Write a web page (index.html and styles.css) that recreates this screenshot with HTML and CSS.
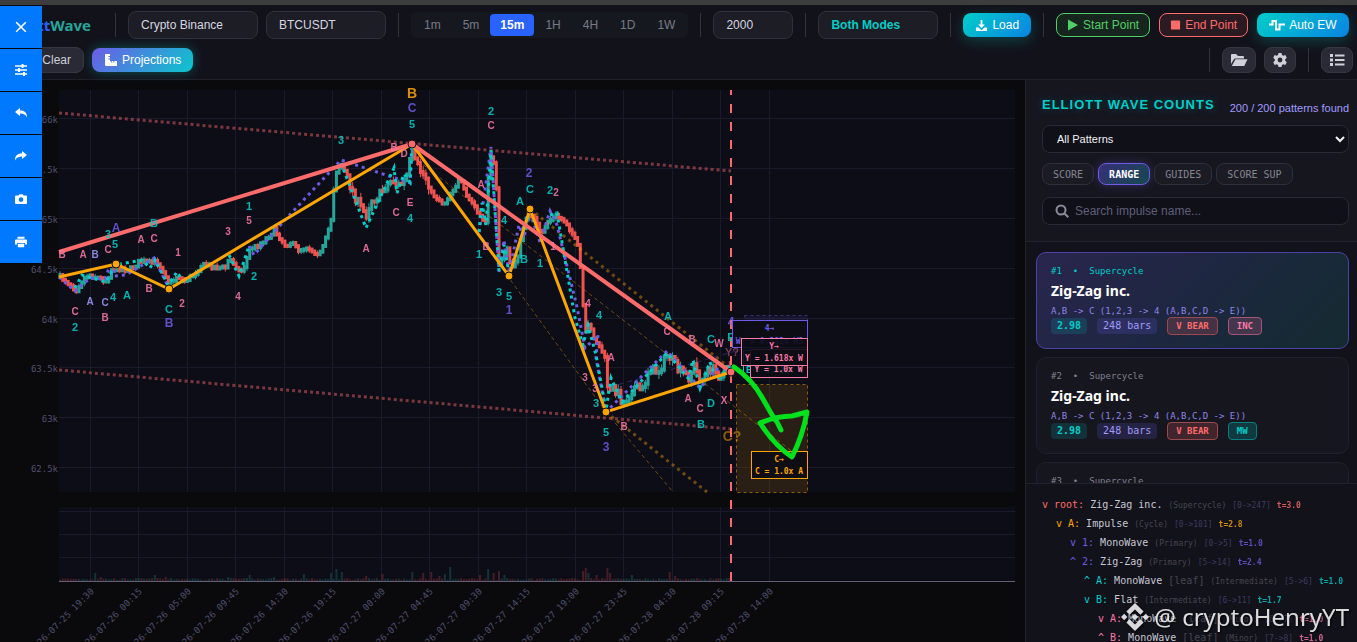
FILE: index.html
```html
<!DOCTYPE html>
<html lang="en">
<head>
  <meta charset="UTF-8" />
  <meta name="viewport" content="width=device-width, initial-scale=1.0"/>
  <title>ElliottWave</title>
  <link rel="stylesheet" href="styles.css">
</head>
<body>
  <header class="toolbar">
    <div class="row">
      <div class="logo"><span>Elliott</span>Wave</div>
      <i class="divider"></i>
      <div class="group">
        <select class="field w-exchange" aria-label="Exchange"><option>Crypto Binance</option></select>
        <input class="field w-symbol" type="text" value="BTCUSDT" aria-label="Symbol">
      </div>
      <i class="divider"></i>
      <div class="timeframes">
        <button>1m</button>
        <button>5m</button>
        <button class="active">15m</button>
        <button>1H</button>
        <button>4H</button>
        <button>1D</button>
        <button>1W</button>
      </div>
      <i class="divider"></i>
      <input class="field w-bars" type="text" value="2000" aria-label="Bars">
      <i class="divider"></i>
      <select class="field w-mode mode" aria-label="Mode"><option>Both Modes</option></select>
      <i class="divider"></i>
      <button class="btn primary">
        <svg viewBox="0 0 14 14" width="13" height="13"><path d="M6 1h2v5h2.600L7 9.800 3.400 6H6z"/><path d="M1 9.200h2.800L7 12l3.200-2.800H13v3.800H1z"/></svg>
        Load
      </button>
      <i class="divider"></i>
      <div class="group actions">
        <button class="btn start"><svg viewBox="0 0 12 12" width="12" height="12"><path d="M1 0.500L11 6 1 11.500z"/></svg>Start Point</button>
        <button class="btn end"><svg viewBox="0 0 12 12" width="11" height="12"><rect x="1" y="1" width="10" height="10" rx="1"/></svg>End Point</button>
        <button class="btn primary"><svg viewBox="0 0 16 12" width="16" height="12"><path class="line" d="M0 5.500h3.500V2H7v8.500h3.500V5.500H16"/></svg>Auto EW</button>
      </div>
    </div>
    <div class="row second">
      <div class="group">
        <button class="btn plain clear">Clear</button>
        <button class="btn projections"><svg viewBox="0 0 14 14" width="14" height="14"><path d="M1 1h5v2H4.500v1H6v1.500H4.500v1H6V8h.800V9.500h1V8h1.500v1.500h1V8H13v5H2a1 1 0 0 1-1-1z"/></svg>Projections</button>
      </div>
      <div class="tools">
        <i class="divider"></i>
        <div class="group">
          <button class="btn plain icon" aria-label="Open"><svg viewBox="0 0 18 14" width="18" height="14"><path d="M1 11V2a1 1 0 0 1 1-1h4l2 2h5a1 1 0 0 1 1 1v1.500H5.500a2 2 0 0 0-1.700 1z"/><path d="M5.500 6.300H17.500L14.500 12.400a1 1 0 0 1-1 .600H1.800z"/></svg></button>
          <button class="btn plain icon" aria-label="Settings"><svg viewBox="0 0 16 16" width="16" height="16"><path fill-rule="evenodd" d="M6.500 1h3l.5 2.100 1.200.7 2.100-.7 1.500 2.600-1.600 1.500v1.600l1.600 1.500-1.500 2.600-2.100-.7-1.200.7L9.500 15h-3L6 12.900l-1.200-.7-2.100.7-1.500-2.600 1.600-1.500V7.200L1.200 5.700l1.500-2.600 2.100.7L6 3.100zM8 5.600a2.400 2.400 0 1 0 0 4.800 2.400 2.400 0 0 0 0-4.800z"/></svg></button>
        </div>
        <i class="divider"></i>
        <button class="btn plain icon" aria-label="List"><svg viewBox="0 0 16 14" width="16" height="14"><path d="M1 1h3v3H1zM1 5.500h3v3H1zM1 10h3v3H1zM6 1.600h9.500v1.800H6zM6 6.100h9.500v1.800H6zM6 10.600h9.500v1.800H6z"/></svg></button>
      </div>
    </div>
  </header>

  <nav class="sidebar">
    <button aria-label="Close"><svg viewBox="0 0 12 12"><path d="M1.200 1.200l9.600 9.600M10.800 1.200l-9.600 9.600" fill="none" stroke="currentColor" stroke-width="1.600"/></svg></button>
    <button aria-label="Adjust"><svg viewBox="0 0 12 12"><path d="M0 2h12M0 6h12M0 10h12" fill="none" stroke="currentColor" stroke-width="1.400"/><path d="M6.500 0h2v4h-2zM3 4h2v4H3zM8 8h2v4H8z"/></svg></button>
    <button aria-label="Undo"><svg viewBox="0 0 12 12"><path d="M0 5l5-4v2.500c4 0 7 1.500 7 7-1.500-3-3.500-4-7-4V9z"/></svg></button>
    <button aria-label="Redo"><svg viewBox="0 0 12 12"><path d="M12 5L7 1v2.500c-4 0-7 1.500-7 7 1.500-3 3.500-4 7-4V9z"/></svg></button>
    <button aria-label="Snapshot"><svg viewBox="0 0 12 12"><path fill-rule="evenodd" d="M1 2.500h2.500l1-1.300h3l1 1.300H11a1 1 0 0 1 1 1V10a1 1 0 0 1-1 1H1a1 1 0 0 1-1-1V3.500a1 1 0 0 1 1-1zM6 4.300a2.300 2.300 0 1 0 0 4.600 2.300 2.300 0 0 0 0-4.600z"/></svg></button>
    <button aria-label="Print"><svg viewBox="0 0 12 12"><path d="M2.500.800h7v2h-7zM1 3.500h10a1 1 0 0 1 1 1V8.500h-2V7H2v1.500H0v-4a1 1 0 0 1 1-1zM2.800 7.800h6.400v3.400H2.800z"/></svg></button>
  </nav>

  <main class="workspace">
    <svg class="chart" id="chart" viewBox="0 80 1025 562" preserveAspectRatio="xMinYMin meet"></svg>

    <aside class="panel">
      <section class="filters">
        <div class="heading">
          <h2>ELLIOTT WAVE COUNTS</h2>
          <span>200 / 200 patterns found</span>
        </div>
        <select class="patterns" aria-label="Pattern"><option>All Patterns</option></select>
        <div class="chips">
          <button>SCORE</button>
          <button class="active">RANGE</button>
          <button>GUIDES</button>
          <button>SCORE SUP</button>
        </div>
        <label class="search">
          <svg viewBox="0 0 14 14" width="14" height="14"><circle cx="6" cy="6" r="4.500"/><path d="M9.300 9.300l4 4"/></svg>
          <input type="text" placeholder="Search impulse name..." aria-label="Search impulse name">
        </label>
      </section>

      <section class="cards">
        <article class="card selected">
          <div class="meta"><span>#1</span><span>•</span><span>Supercycle</span></div>
          <h3>Zig-Zag inc.</h3>
          <div class="formula">A,B -&gt; C (1,2,3 -&gt; 4 (A,B,C,D -&gt; E))</div>
          <div class="badges"><span class="score">2.98</span><span class="bars">248 bars</span><span class="tag bear">V BEAR</span><span class="tag inc">INC</span></div>
        </article>
        <article class="card">
          <div class="meta"><span>#2</span><span>•</span><span>Supercycle</span></div>
          <h3>Zig-Zag inc.</h3>
          <div class="formula">A,B -&gt; C (1,2,3 -&gt; 4 (A,B,C,D -&gt; E))</div>
          <div class="badges"><span class="score">2.98</span><span class="bars">248 bars</span><span class="tag bear">V BEAR</span><span class="tag mw">MW</span></div>
        </article>
        <article class="card">
          <div class="meta"><span>#3</span><span>•</span><span>Supercycle</span></div>
          <h3>Zig-Zag inc.</h3>
        </article>
      </section>

      <ul class="tree">
        <li class="root"><b>v root:</b> Zig-Zag inc. <small>(Supercycle)</small> <small class="range">[0-&gt;247]</small> <em>t=3.0</em></li>
        <li class="cycle"><b>v A:</b> Impulse <small>(Cycle)</small> <small class="range">[0-&gt;101]</small> <em>t=2.8</em></li>
        <li class="primary-wave"><b>v 1:</b> MonoWave <small>(Primary)</small> <small class="range">[0-&gt;5]</small> <em>t=1.0</em></li>
        <li class="primary-wave"><b>^ 2:</b> Zig-Zag <small>(Primary)</small> <small class="range">[5-&gt;14]</small> <em>t=2.4</em></li>
        <li class="inter"><b>^ A:</b> MonoWave <i>[leaf]</i> <small>(Intermediate)</small> <small class="range">[5-&gt;6]</small> <em>t=1.0</em></li>
        <li class="inter"><b>v B:</b> Flat <small>(Intermediate)</small> <small class="range">[6-&gt;11]</small> <em>t=1.7</em></li>
        <li class="minor"><b>v A:</b> MonoWave <i>[leaf]</i> <small>(Minor)</small> <small class="range">[6-&gt;7]</small> <em>t=1.0</em></li>
        <li class="minor"><b>^ B:</b> MonoWave <i>[leaf]</i> <small>(Minor)</small> <small class="range">[7-&gt;8]</small> <em>t=1.0</em></li>
      </ul>
    </aside>
  </main>

  <div class="watermark">
    <svg viewBox="0 0 28 28" width="28" height="28"><path d="M14 0l8.600 8.600-3.200 3.200L14 6.400l-5.400 5.400-3.200-3.200zM3.200 10.800L6.400 14l-3.200 3.200L0 14zM14 10.800l3.200 3.200-3.200 3.200-3.200-3.200zM24.800 10.800L28 14l-3.200 3.200-3.200-3.200zM8.600 16.200l5.400 5.400 5.400-5.400 3.200 3.200L14 28l-8.600-8.600z"/></svg>
    <span>@ cryptoHenryYT</span>
  </div>

  <script src="chart.js"></script>
</body>
</html>
```
FILE: styles.css
```css
* { margin: 0; padding: 0; box-sizing: border-box; }
html, body { height: 100%; }
body {
  display: flex;
  flex-direction: column;
  overflow: hidden;
  position: relative;
  border-top: 5px solid #3d3d3d;
  background: #0a0a0d;
  color: #d6d6e0;
  font-family: "Liberation Sans", Arial, sans-serif;
  font-size: 12px;
}
button, input, select {
  font: inherit;
  color: inherit;
  border: none;
  background: none;
}
svg { fill: currentColor; }
.line {
  fill: none;
  stroke: currentColor;
  stroke-width: 2;
}

/* toolbar */
.toolbar {
  flex: none;
  padding: 6px 4px 5px 8px;
  background: #12121a;
  border-bottom: 1px solid #202029;
}
.row {
  display: flex;
  align-items: center;
  gap: 12px;
  height: 28px;
}
.second {
  margin-top: 7px;
  justify-content: space-between;
}
.group, .tools {
  display: flex;
  align-items: center;
  gap: 8px;
}
.actions { gap: 9px; }
.tools { gap: 12px; }
.logo {
  width: 83px;
  margin-right: 12px;
  display: flex;
  justify-content: flex-end;
  font: bold 15px "Noto Sans", sans-serif;
  color: #26a69a;
}
.logo span { color: #2962ff; }
.divider {
  width: 1px;
  height: 24px;
  background: #33333c;
}
.field {
  height: 28px;
  padding: 0 12px;
  border: 1px solid #30303a;
  border-radius: 8px;
  background: #1d1d25;
  appearance: none;
}
.w-exchange { width: 130px; }
.w-symbol, .w-mode { width: 120px; }
.w-bars { width: 80px; }
.mode { color: #00cec9; font-weight: bold; }

.timeframes {
  display: flex;
  padding: 2px;
  height: 26px;
  border-radius: 6px;
  background: #161820;
}
.timeframes button {
  padding: 0 11px;
  border-radius: 4px;
  color: #787b86;
}
.timeframes .active {
  padding: 0 10px;
  background: #2962ff;
  color: #fff;
  font-weight: bold;
}

.btn {
  display: flex;
  align-items: center;
  gap: 4px;
  height: 24px;
  padding: 0 12px;
  border-radius: 8px;
  white-space: nowrap;
}
.primary {
  background: linear-gradient(135deg, #00cec9, #0984e3);
  box-shadow: 0 4px 14px rgba(0, 206, 201, .25);
  color: #fff;
}
.start, .end { padding: 0 10px; }
.start {
  border: 1px solid #51cf66;
  background: #17251f;
  color: #51cf66;
}
.end {
  border: 1px solid #ff6b6b;
  background: #2a1a22;
  color: #ff6b6b;
}
.plain {
  height: 26px;
  border: 1px solid #363640;
  background: #2a2a36;
  color: #d0d0da;
}
.icon { padding: 0 7px; }
.clear { width: 76px; justify-content: flex-end; }
.projections {
  background: linear-gradient(135deg, #6c5ce7, #0bc6cd);
  box-shadow: 0 0 12px rgba(0, 206, 201, .35);
  color: #fff;
}

/* drawing tools over the left edge */
.sidebar {
  position: absolute;
  top: 0;
  left: 0;
  width: 42px;
  padding-top: 1px;
  display: grid;
  gap: 1px;
  background: #0a0a0d;
  z-index: 2;
}
.sidebar button {
  height: 42px;
  display: grid;
  place-items: center;
  background: #0079ff;
  color: #fff;
}
.sidebar svg { width: 12px; height: 12px; }

.workspace {
  flex: 1;
  min-height: 0;
  display: flex;
}
.chart { flex: 1; min-width: 0; height: 100%; }
.chart text { text-anchor: middle; font-weight: bold; }
.chart .axis {
  font: 9px "DejaVu Sans Mono", monospace;
  text-anchor: end;
  fill: #50506e;
}
.chart .note { font: bold 8px "DejaVu Sans Mono", monospace; }

/* right panel */
.panel {
  flex: none;
  width: 332px;
  display: flex;
  flex-direction: column;
  border-left: 1px solid #23232c;
  background: #12121a;
}
.filters {
  padding: 15px 8px 16px 16px;
  background: #16161f;
  border-bottom: 1px solid #22222c;
}
.heading {
  display: flex;
  justify-content: space-between;
  align-items: flex-end;
  height: 20px;
  margin-bottom: 10px;
}
.heading h2 {
  font-size: 13px;
  letter-spacing: 1px;
  line-height: 20px;
  color: #00cec9;
  text-shadow: 0 0 10px rgba(0, 206, 201, .3);
}
.heading span { font-size: 11px; line-height: 14px; color: #a29bfe; }
.patterns {
  width: 100%;
  height: 28px;
  padding-left: 10px;
  border: 1px solid #2a2a34;
  border-radius: 8px;
  background: #101018;
  color: #f0f0f5;
  font-size: 11px;
}
.chips {
  display: flex;
  gap: 4px;
  margin: 10px 0 12px;
}
.chips button {
  height: 22px;
  padding: 0 10px;
  border: 1px solid #2f2f39;
  border-radius: 8px;
  background: #1b1b24;
  color: #858592;
  font: 10px "DejaVu Sans Mono", monospace;
}
.chips .active {
  border-color: #6c5ce7;
  background: linear-gradient(135deg, #382f78, #15484f);
  box-shadow: 0 0 10px rgba(108, 92, 231, .35);
  color: #fff;
  font-weight: bold;
}
.search {
  display: flex;
  align-items: center;
  gap: 6px;
  height: 28px;
  padding: 0 12px;
  border: 1px solid #2a2a34;
  border-radius: 8px;
  background: #101018;
}
.search svg {
  fill: none;
  stroke: #8a8a98;
  stroke-width: 2;
}
.search input { flex: 1; outline: none; }
.search input::placeholder { color: #5f5f78; }

.cards {
  flex: 61 1 0;
  min-height: 0;
  overflow: hidden;
  padding: 10px 8px 0 10px;
  display: flex;
  flex-direction: column;
  gap: 8px;
}
.card {
  flex: none;
  height: 97px;
  padding: 12px 14px;
  border: 1px solid #20202a;
  border-radius: 10px;
  background: #16161f;
}
.selected {
  border-color: #4b43a8;
  background: linear-gradient(135deg, #29254d, #1d2740 50%, #142b30);
}
.meta {
  display: flex;
  gap: 11px;
  font: 9px/12px "DejaVu Sans Mono", monospace;
  color: #80808c;
}
.selected .meta { color: #00cec9; }
.card h3 {
  font: bold 14px/28px "Noto Sans", sans-serif;
  color: #fff;
}
.formula {
  font: 9px/12px "DejaVu Sans Mono", monospace;
  color: #9185e8;
}
.badges {
  display: flex;
  align-items: center;
  gap: 10px;
  font: 10px/16px "DejaVu Sans Mono", monospace;
}
.badges span { padding: 0 6px; border-radius: 4px; }
.score { background: rgba(0, 206, 201, .15); color: #00cec9; font-weight: bold; }
.bars { background: rgba(108, 92, 231, .18); color: #a29bfe; }
.badges .tag {
  padding: 0 8px;
  border: 1px solid;
  font-size: 9px;
  font-weight: bold;
  white-space: nowrap;
}
.badges .bear { background: rgba(255, 107, 107, .18); border-color: #9d474f; color: #ff6b6b; }
.badges .inc { background: rgba(253, 121, 168, .18); border-color: #a65578; color: #fd79a8; }
.badges .mw { background: rgba(0, 206, 201, .2); border-color: #087f80; color: #00cec9; }

.tree {
  flex: 39 1 0;
  min-height: 0;
  overflow: hidden;
  padding: 11px 0 0 16px;
  list-style: none;
  border-top: 1px solid #23232d;
  font: 10px/19px "DejaVu Sans Mono", monospace;
  white-space: nowrap;
  color: #c8c8d4;
}
.tree li { height: 19px; }
.tree small { font-size: 8px; color: #464650; }
.tree .range { color: #3d3a60; }
.tree i { font-style: normal; color: #464650; }
.tree b { font-weight: normal; }
.tree em { font: bold 8px "DejaVu Sans Mono", monospace; opacity: .8; }
.root b, .root em { color: #ff6b6b; }
.cycle { padding-left: 14px; }
.cycle b, .cycle em { color: #ffa500; }
.primary-wave { padding-left: 28px; }
.primary-wave b, .primary-wave em { color: #6c5ce7; }
.inter { padding-left: 42px; }
.inter b, .inter em { color: #00cec9; }
.minor { padding-left: 56px; }
.minor b, .minor em { color: #fd79a8; }

.watermark {
  position: absolute;
  right: 8px;
  bottom: 8px;
  display: flex;
  align-items: center;
  gap: 5px;
  color: rgba(255, 255, 255, .85);
  font: 24px/34px "Noto Sans", sans-serif;
  filter: drop-shadow(1px 1px 1px #000);
}
```
FILE: chart.js
```js
const RED = '#ff6b6b', ORANGE = '#ffa500', PURPLE = '#6c5ce7', TEAL = '#00cec9', PINK = '#fd79a8';
const UP = '#26a69a', DOWN = '#ef5350';

const chart = document.getElementById('chart');
const parts = [];
const left = 59, right = 1015, lastBar = 731;

function line(x1, y1, x2, y2, attrs) {
  parts.push(`<line x1="${x1}" y1="${y1}" x2="${x2}" y2="${y2}" ${attrs}/>`);
}
function poly(points, attrs) {
  parts.push(`<polyline points="${points}" fill="none" ${attrs}/>`);
}
function rect(x, y, w, h, attrs) {
  parts.push(`<rect x="${x}" y="${y}" width="${w}" height="${h}" ${attrs}/>`);
}

// small repeatable random generator
let seed = 7;
function rnd() {
  seed = (seed * 16807) % 2147483647;
  return seed / 2147483647;
}

// panes and grid
rect(left, 90, right - left, 402, 'fill="#0d0d17"');
rect(left, 507, right - left, 74, 'fill="#0d0d17"');

const grid = 'stroke="#1a1a2a" stroke-width="1"';
const times = ['25 19:30', '26 00:15', '26 05:00', '26 09:45', '26 14:30', '26 19:15', '27 00:00', '27 04:45',
  '27 09:30', '27 14:15', '27 19:00', '27 23:45', '28 04:30', '28 09:15', '28 14:00'];
times.forEach((t, i) => {
  const x = Math.floor(90 + i * 48.5) + 0.5;
  line(x, 90, x, 492, grid);
  line(x, 507, x, 581, grid);
  parts.push(`<text class="axis" transform="translate(${x + 4} 592) rotate(-45)">2026-07-${t}</text>`);
});
['66k', '65.5k', '65k', '64.5k', '64k', '63.5k', '63k', '62.5k'].forEach((p, i) => {
  const y = Math.floor(118.9 + i * 49.8) + 0.5;
  line(left, y, right, y, grid);
  parts.push(`<text class="axis" x="58" y="${y + 4}">${p}</text>`);
});
[511.5, 534.5, 557.5].forEach(y => line(left, y, right, y, grid));

// price bars
const path = [[59,277],[66,282],[75,290],[82,279],[88,275],[100,279],[106,281],[110,270],[117,268],[128,270],[135,265],
  [139,261],[150,263],[156,262],[163,272],[168,283],[172,281],[177,276],[183,281],[190,277],[195,272],[200,266],[206,265],
  [213,267],[224,268],[228,259],[234,264],[239,273],[244,265],[249,248],[255,247],[261,242],[268,236],[273,230],[279,238],
  [284,245],[290,243],[298,250],[306,247],[313,252],[320,253],[326,235],[331,215],[333,185],[336,168],[341,166],[346,178],
  [352,192],[358,205],[365,215],[370,200],[378,196],[385,185],[392,180],[397,186],[405,180],[411,150],[414,162],[420,172],
  [427,180],[429,192],[437,199],[443,204],[450,192],[459,180],[465,196],[473,205],[478,217],[485,221],[488,165],[491,150],
  [495,178],[498,265],[503,255],[506,247],[510,270],[517,255],[523,225],[529,212],[534,220],[540,236],[546,222],[555,216],
  [565,222],[572,235],[578,250],[581,290],[584,335],[588,325],[592,335],[597,345],[602,352],[606,372],[607,402],[610,388],
  [615,390],[622,403],[627,397],[632,388],[642,390],[648,368],[657,372],[667,354],[677,370],[688,377],[693,366],[700,381],
  [710,368],[717,375],[727,370],[732,364]];
function priceAt(x) {
  for (let i = 1; i < path.length; i++) {
    if (x <= path[i][0]) {
      const [x0, y0] = path[i - 1], [x1, y1] = path[i];
      return y0 + (y1 - y0) * (x - x0) / (x1 - x0);
    }
  }
  return path[path.length - 1][1];
}
const spikes = { 93: 8, 100: 4, 154: 6, 166: 4, 228: 4, 248: 6, 274: 4, 302: 7, 330: 8, 335: 12, 340: 9, 366: 5, 381: 7,
  412: 9, 422: 8, 430: 9, 438: 5, 443: 7, 450: 14, 479: 6, 488: 12, 492: 8, 499: 10, 504: 6, 581: 10, 584: 13, 587: 8,
  596: 6, 606: 13, 609: 8, 630: 6, 668: 9, 673: 5 };
let open = 277;
for (let i = 0; i < 248; i++) {
  const x = left + i * 2.71;
  const busy = (x > 340 && x < 430) || x > 600;
  const close = priceAt(x) + (rnd() - 0.5) * (busy ? 9 : 4);
  const top = Math.min(open, close), bottom = Math.max(open, close);
  const color = close < open ? UP : DOWN;
  const wick = busy ? 7 : 4;
  line(x + 1, top - rnd() * wick, x + 1, bottom + rnd() * wick, `stroke="${color}" stroke-width="1"`);
  rect(x - 0.5, top - 2, 3, bottom - top + 4, `fill="${color}"`);

  let h = 1 + rnd() * 2;
  for (const s in spikes) if (Math.abs(s - x) < 1.36) h = spikes[s];
  rect(x, 581 - h, 2, h, `fill="${color}" opacity="0.25"`);
  open = close;
}

line(left, 581.5, right, 581.5, 'stroke="#625d72"');

// guides and projected channels
const guide = `stroke="${RED}" stroke-width="3" stroke-dasharray="3 3" opacity="0.45"`;
line(left, 113, lastBar, 171, guide);
line(left, 370, lastBar, 429, guide);
const wide = `stroke="${ORANGE}" stroke-width="3" stroke-dasharray="3 4" opacity="0.4"`;
line(530, 209, lastBar, 369, wide);
line(606, 412, 707, 492, wide);
const thin = `stroke="${ORANGE}" stroke-width="1" stroke-dasharray="4 3" opacity="0.4"`;
line(412, 144, 606, 412, thin);
line(412, 156, 807, 463, thin);
line(606, 412, 673, 492, thin);
line(610, 387, 743, 349, `stroke="${PURPLE}" stroke-dasharray="5 4" opacity="0.35"`);

// minor waves
const dots = 'stroke-width="3" stroke-dasharray="3 4"';
poly('59,277 75,291 90,278 105,279 108,271 115,262 114,276 126,275 154,258 167,284', `stroke="${PURPLE}" ${dots}`);
poly('249,246 254,255 283,222 341,160 410,183 412,144', `stroke="${PURPLE}" ${dots}`);
poly('479,232 485,190 491,147 499,272 504,240 509,273 519,225 524,238 529,210 540,242 550,211 557,225 577,307 585,348 598,335 596,358 606,412 667,351 700,388 715,370 731,366', `stroke="${PURPLE}" ${dots}`);
poly('75,288 82,275 106,282 115,265 142,260 150,268 155,260 168,285 177,272 184,283', `stroke="${TEAL}" ${dots}`);
poly('229,255 239,276 249,246', `stroke="${TEAL}" ${dots}`);
poly('341,163 366,228 394,168 397,193 404,174 410,182 412,144', `stroke="${TEAL}" ${dots}`);
poly('479,232 482,203 486,225 491,150 499,271 504,245 509,273', `stroke="${TEAL}" ${dots}`);
poly('550,215 557,213 575,318 583,345 588,325 596,355 606,410 611,378 622,402 667,353 688,378 693,360 700,388 710,362 716,380 731,366', `stroke="${TEAL}" ${dots}`);

// main waves
poly('59,277 116,264 169,289 412,144 509,276 530,209 606,412 731,372', `stroke="${ORANGE}" stroke-width="3"`);
poly('59,252 412,144 731,372', `stroke="${RED}" stroke-width="4"`);
line(lastBar, 90, lastBar, 581, `stroke="${RED}" stroke-width="2" stroke-dasharray="9 9" stroke-dashoffset="4"`);
[[116, 264], [169, 289], [509, 276], [530, 209], [606, 412]].forEach(([x, y]) => {
  parts.push(`<circle cx="${x}" cy="${y}" r="4" fill="${ORANGE}" stroke="#0d0d17"/>`);
});
[[412, 144], [731, 372]].forEach(([x, y]) => {
  parts.push(`<circle cx="${x}" cy="${y}" r="4" fill="${RED}" stroke="#0d0d17"/>`);
});

// wave labels: text, x, y, grouped by degree
function labels(color, size, opacity, list) {
  list.forEach(([t, x, y]) => {
    parts.push(`<text x="${x}" y="${y + Math.round(size * 0.36)}" font-size="${size}" fill="${color}" opacity="${opacity}">${t}</text>`);
  });
}
labels(TEAL, 11, 0.85, [['3',341,140],['1',249,206],['3',108,234],['5',115,244],['B',154,223],['4',113,297],['A',127,295],
  ['2',75,327],['C',169,309],['2',254,276],['5',412,124],['4',410,218],['2',491,111],['1',479,254],['3',499,292],
  ['5',509,296],['4',504,220],['A',520,201],['C',530,189],['B',524,259],['1',540,263],['2',550,190],['4',599,315],
  ['3',596,403],['5',606,432],['A',668,316],['C',711,339],['E',731,337],['D',711,403],['B',701,424]]);
labels(PINK, 10, 0.85, [['5',249,220],['3',228,231],['C',108,249],['A',141,239],['C',154,238],['1',178,252],['B',62,254],
  ['A',83,254],['B',394,147],['C',396,212],['A',366,248],['C',75,311],['B',105,317],['B',149,288],['2',182,303],
  ['4',238,296],['D',404,153],['E',410,202],['C',491,125],['A',481,184],['B',486,246],['2',556,192],['1',553,246],
  ['4',588,303],['A',611,357],['3',585,377],['3',595,388],['B',624,426],['C',667,331],['B',692,339],['W',719,343],
  ['A',688,398],['C',700,408],['X',724,400]]);
labels('#a29bfe', 10, 0.85, [['B',95,254],['A',90,301],['C',105,302]]);
labels(PURPLE, 12, 0.85, [['A',116,228],['B',169,323],['C',412,108],['1',509,310],['2',529,173],['3',606,447],['4',731,322]]);
labels(ORANGE, 14, 0.85, [['B',412,93]]);
labels(PINK, 11, 0.45, [['Y?',732,352]]);
labels(ORANGE, 14, 0.5, [['C?',732,436]]);

// projection boxes
function note(x, y, w, h, color, rows) {
  rect(x + 0.5, y + 0.5, w, h, `fill="#0c0c14" fill-opacity="0.9" stroke="${color}"`);
  rows.forEach(([t, dy]) => {
    parts.push(`<text class="note" x="${x + w / 2}" y="${y + dy}" fill="${color}">${t}</text>`);
  });
}
rect(744.5, 315.5, 63, 40, `fill="${PURPLE}" fill-opacity="0.1" stroke="${PURPLE}" stroke-opacity="0.4" stroke-dasharray="3 3"`);
rect(736.5, 384.5, 71, 108, `fill="${ORANGE}" fill-opacity="0.12" stroke="${ORANGE}" stroke-opacity="0.5" stroke-dasharray="3 3"`);
note(732, 320, 75, 27, PURPLE, [['4→', 11], ['W: = 0.382x W3', 24]]);
note(743, 350, 64, 27, TEAL, [['E = 0.618x C', 23]]);
note(750, 349, 57, 28, PINK, [['Y→', 11], ['Y = 1.0x W', 23]]);
note(741, 338, 66, 27, PINK, [['Y→', 11], ['Y = 1.618x W', 23]]);
note(751, 451, 56, 27, ORANGE, [['C→', 11], ['C = 1.0x A', 23]]);

// freehand arrow
parts.push('<path d="M734 367Q752 379 763 399T777 422L781 430M760 423Q777 416 792 416L807 412Q803 435 792 457Q775 446 760 423" fill="none" stroke="#00e01c" stroke-width="5" stroke-linecap="round" stroke-linejoin="round"/>');

chart.innerHTML = parts.join('');
```
